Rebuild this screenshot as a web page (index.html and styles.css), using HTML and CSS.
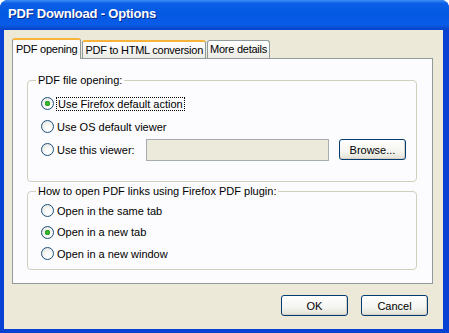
FILE: index.html
```html
<!DOCTYPE html>
<html lang="en">
<head>
  <meta charset="UTF-8" />
  <title>PDF Download - Options</title>
  <link rel="stylesheet" href="styles.css">
</head>
<body>
  <div class="window">
    <div class="titlebar">PDF Download - Options</div>
    <div class="client">
      <div class="tabs">
        <div class="tab selected">PDF opening</div>
        <div class="tab hot">PDF to HTML conversion</div>
        <div class="tab">More details</div>
      </div>

      <div class="panel">
        <fieldset class="group first">
          <legend>PDF file opening:</legend>
          <label class="row">
            <input type="radio" name="open" checked>
            <span class="focus">Use Firefox default action</span>
          </label>
          <label class="row">
            <input type="radio" name="open">
            <span>Use OS default viewer</span>
          </label>
          <div class="row">
            <label class="viewer-label">
              <input type="radio" name="open">
              <span>Use this viewer:</span>
            </label>
            <input type="text" class="path" disabled>
            <button class="btn browse">Browse...</button>
          </div>
        </fieldset>

        <fieldset class="group second">
          <legend>How to open PDF links using Firefox PDF plugin:</legend>
          <label class="row">
            <input type="radio" name="plugin">
            <span>Open in the same tab</span>
          </label>
          <label class="row">
            <input type="radio" name="plugin" checked>
            <span>Open in a new tab</span>
          </label>
          <label class="row">
            <input type="radio" name="plugin">
            <span>Open in a new window</span>
          </label>
        </fieldset>
      </div>

      <div class="actions">
        <button class="btn">OK</button>
        <button class="btn">Cancel</button>
      </div>
    </div>
  </div>
</body>
</html>
```

FILE: styles.css
```css
body {
  margin: 0;
  font-family: "Liberation Sans", Arial, sans-serif;
  font-size: 11px;
  color: #000;
  background: #fff;
}

.window {
  width: 449px;
  height: 333px;
  display: flex;
  flex-direction: column;
  background: #0842d2;
  border-radius: 8px 8px 0 0;
  box-sizing: border-box;
}

.titlebar {
  height: 29px;
  padding-left: 8px;
  line-height: 27px;
  color: #fff;
  font-size: 13px;
  font-weight: bold;
  letter-spacing: -0.2px;
  text-shadow: 1px 1px #0a2a8c;
  border-radius: 8px 8px 0 0;
  background: linear-gradient(#3d8df5 0%, #0a5fe6 12%, #0358e2 50%, #0a5ce8 85%, #0648c8 100%);
}

.client {
  flex: 1;
  margin: 1px 6px 4px 4px;
  padding: 8px 10px 0 8px;
  background: #ece9d8;
}

.tabs {
  display: flex;
  align-items: flex-end;
  height: 20px;
  position: relative;
  z-index: 1;
}

.tab {
  height: 17px;
  line-height: 17px;
  padding: 0 2px;
  margin-right: 1px;
  border: 1px solid #919b9c;
  border-bottom: none;
  border-radius: 3px 3px 0 0;
  background: linear-gradient(#fff, #ecebe6);
  white-space: nowrap;
  letter-spacing: -0.25px;
}

.tab.hot,
.tab.selected {
  border-top: 2px solid #f7b33a;
  height: 16px;
}

.tab.selected {
  height: 19px;
  line-height: 19px;
  padding: 0 3px;
  margin-bottom: -1px;
  background: #fcfcfe;
}

.panel {
  height: 224px;
  border: 1px solid #919b9c;
  background: #fcfcfe;
  padding: 0 15px 0 14px;
}

.group {
  margin: 15px 0 0;
  padding: 5px 9px 20px 8px;
  border: 1px solid #d0d0bf;
  border-radius: 4px;
}

.group legend {
  padding: 0 2px;
  line-height: 13px;
}

.group.second {
  margin-top: 3px;
  padding-top: 2px;
  padding-bottom: 4px;
}

.row {
  display: flex;
  align-items: center;
  height: 23px;
  padding-left: 5px;
}

.group.second .row {
  height: 21.5px;
}

.row input[type="radio"],
.viewer-label input[type="radio"] {
  appearance: none;
  width: 13px;
  height: 13px;
  margin: 0 3px 0 0;
  border: 1px solid #1c5180;
  border-radius: 50%;
  background: radial-gradient(circle at 60% 65%, #fff 20%, #dcdcd6 100%);
  box-sizing: border-box;
  flex-shrink: 0;
}

.row input[type="radio"]:checked,
.viewer-label input[type="radio"]:checked {
  background:
    radial-gradient(circle, #4fbd3c 0, #21a121 2.5px, transparent 3px),
    radial-gradient(circle at 60% 65%, #fff 20%, #dcdcd6 100%);
}

.focus {
  outline: 1px dotted #000;
  outline-offset: 0;
  padding: 0 1px;
}

.viewer-label {
  display: flex;
  align-items: center;
  width: 105px;
}

.path {
  width: 183px;
  height: 22px;
  margin: 0;
  box-sizing: border-box;
  border: 1px solid #a5acb2;
  background: #ebeadb;
}

.btn {
  height: 21px;
  padding: 0;
  font-family: inherit;
  font-size: 11px;
  color: #000;
  border: 1px solid #003c74;
  border-radius: 3px;
  background: linear-gradient(#fff 0%, #f4f4f0 60%, #e3e1d6 100%);
  box-shadow: inset -1px -1px 0 #d6d0c5;
}

.browse {
  width: 67px;
  margin-left: 10px;
}

.actions {
  display: flex;
  justify-content: flex-end;
  gap: 13px;
  margin-top: 11px;
  padding-right: 5px;
}

.actions .btn {
  width: 67px;
}
```
